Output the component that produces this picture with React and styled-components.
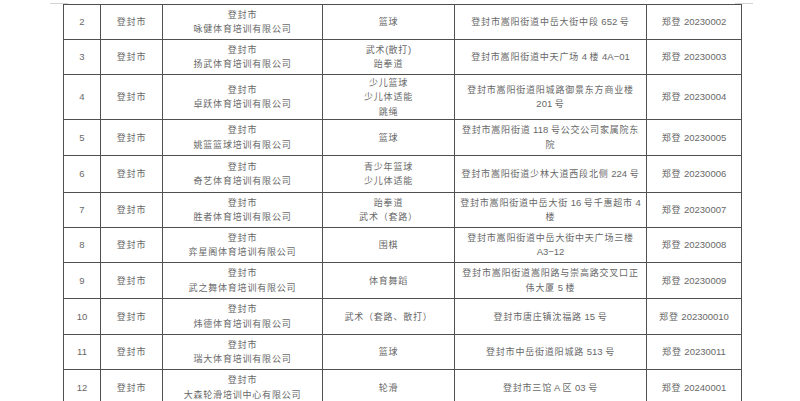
import styled, { createGlobalStyle } from 'styled-components';

const GlobalStyle = createGlobalStyle`
  html, body {
    margin: 0;
    padding: 0;
    background: #fff;
  }
`;

const rows = [
  { no: '2', h: 35, name: '咏健体育培训有限公司', sport: ['篮球'], addr: ['登封市嵩阳街道中岳大街中段 652 号'], reg: '20230002' },
  { no: '3', h: 35, name: '扬武体育培训有限公司', sport: ['武术(散打)', '跆拳道'], addr: ['登封市嵩阳街道中天广场 4 楼 4A−01'], reg: '20230003' },
  { no: '4', h: 45, name: '卓跃体育培训有限公司', sport: ['少儿篮球', '少儿体适能', '跳绳'], addr: ['登封市嵩阳街道阳城路御景东方商业楼', '201 号'], reg: '20230004' },
  { no: '5', h: 36, name: '姚篮篮球培训有限公司', sport: ['篮球'], addr: ['登封市嵩阳街道 118 号公交公司家属院东', '院'], reg: '20230005' },
  { no: '6', h: 37, name: '奇艺体育培训有限公司', sport: ['青少年篮球', '少儿体适能'], addr: ['登封市嵩阳街道少林大道西段北侧 224 号'], reg: '20230006' },
  { no: '7', h: 35, name: '胜者体育培训有限公司', sport: ['跆拳道', '武术（套路）'], addr: ['登封市嵩阳街道中岳大街 16 号千惠超市 4', '楼'], reg: '20230007' },
  { no: '8', h: 35, name: '弈星阁体育培训有限公司', sport: ['围棋'], addr: ['登封市嵩阳街道中岳大街中天广场三楼', 'A3−12'], reg: '20230008' },
  { no: '9', h: 36, name: '武之舞体育培训有限公司', sport: ['体育舞蹈'], addr: ['登封市嵩阳街道嵩阳路与崇高路交叉口正', '伟大厦 5 楼'], reg: '20230009' },
  { no: '10', h: 36, name: '炜德体育培训有限公司', sport: ['武术（套路、散打）'], addr: ['登封市唐庄镇沈福路 15 号'], reg: '202300010' },
  { no: '11', h: 35, name: '瑞大体育培训有限公司', sport: ['篮球'], addr: ['登封市中岳街道阳城路 513 号'], reg: '20230011' },
  { no: '12', h: 36, name: '大森轮滑培训中心有限公司', sport: ['轮滑'], addr: ['登封市三馆 A 区 03 号'], reg: '20240001' },
];

// CJK runs get the document's wide letter spacing, latin runs stay tight
const Mixed = ({ text }) =>
  text.split(/([^\u3000-\u9fff\uff00-\uffef]+)/).filter(Boolean).map((part, i) =>
    /[\u3000-\u9fff\uff00-\uffef]/.test(part)
      ? <Cjk key={i}>{part}</Cjk>
      : <Latin key={i}>{part}</Latin>
  );

const Lines = ({ lines }) => lines.map((l, i) => (
  <Line key={i}><Mixed text={l} /></Line>
));

const App = () => {
  return (
    <Page>
      <GlobalStyle />
      <Sheet>
        <colgroup>
          <Col w={37} />
          <Col w={62} />
          <Col w={160} />
          <Col w={132} />
          <Col w={192} />
          <Col w={95} />
        </colgroup>
        <tbody>
          {rows.map((r) => (
            <Row key={r.no} h={r.h}>
              <Cell><Lines lines={[r.no]} /></Cell>
              <Cell><Lines lines={['登封市']} /></Cell>
              <Cell><Lines lines={['登封市', r.name]} /></Cell>
              <Cell><Lines lines={r.sport} /></Cell>
              <Cell><Lines lines={r.addr} /></Cell>
              <Cell><Lines lines={['郑登 ' + r.reg]} /></Cell>
            </Row>
          ))}
        </tbody>
      </Sheet>
    </Page>
  );
};

const Page = styled.div`
  position: relative;
  width: 800px;
  height: 401px;
  overflow: hidden;
  box-sizing: border-box;
  padding: 4px 0 0 63px;
  background: #fff;

  &::before, &::after {
    content: '';
    position: absolute;
    top: 3px;
    height: 1px;
    background: #d4d4d4;
  }
  &::before {
    left: 50px;
    width: 18px;
  }
  &::after {
    left: 735px;
    width: 18px;
  }
`;

const Sheet = styled.table`
  table-layout: fixed;
  width: 679px;
  border-collapse: collapse;
  font-family: "Liberation Sans", "Noto Sans CJK SC", sans-serif;
  font-size: 9px;
  color: #686868;
`;

const Col = styled.col`
  width: ${(p) => p.w}px;
`;

const Row = styled.tr`
  height: ${(p) => p.h}px;
`;

const Cell = styled.td`
  border: 1px solid #505050;
  padding: 0;
  vertical-align: middle;
  white-space: nowrap;
  overflow: hidden;
`;

const Line = styled.div`
  display: flex;
  justify-content: center;
  align-items: center;
  height: 14.5px;
`;

const Cjk = styled.span`
  font-family: "Noto Sans CJK SC", sans-serif;
  letter-spacing: 0.8px;
  line-height: 14px;
`;

const Latin = styled.span`
  font-family: "Liberation Sans", sans-serif;
  font-size: 9.5px;
  letter-spacing: 0;
  line-height: 14px;
  white-space: pre;
`;

export default App;
